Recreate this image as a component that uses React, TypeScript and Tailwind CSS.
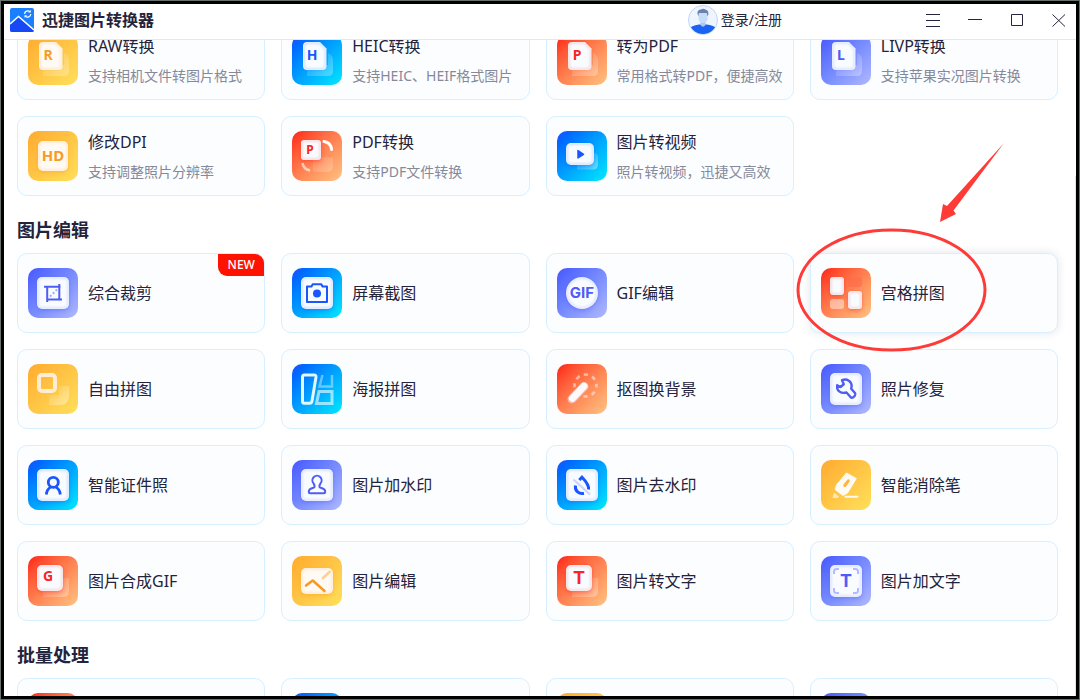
import React, { FC, ReactNode } from 'react';

import clsx from 'clsx';

type Tone = 'orange' | 'blue' | 'red' | 'purple';

type Tool = {
  name?: string;
  description?: string;
  tone: Tone;
  icon?: ReactNode;
  isNew?: boolean;
  marked?: boolean;
};

const TILE_CLASSES: Record<Tone, string> = {
  orange: 'bg-linear-to-br from-[#ffab2e] to-[#ffe05a]',
  blue: 'bg-linear-to-br from-[#1a4cff] to-[#00e8ff]',
  red: 'bg-linear-to-br from-[#ff1212] to-[#ffc382]',
  purple: 'bg-linear-to-br from-[#4855ff] to-[#b0b8ff]'
};

const INK: Record<Tone, string> = {
  orange: '#f79a26',
  blue: '#1a56ff',
  red: '#fb2424',
  purple: '#4f5df5'
};

const GLYPH_FONT = '"Noto Sans", "Open Sans", sans-serif';
const GLYPH_FONT_WIDE = 'Inter, "Liberation Sans", sans-serif';

type PlateProps = {
  x?: number;
  y?: number;
  w?: number;
  h?: number;
  r?: number;
  tone: Tone;
};

const Plate: FC<PlateProps> = ({ x = 9, y = 9, w = 32, h = 32, r = 5, tone }) => (
  <g>
    <rect x={x} y={y + 2} width={w} height={h} rx={r} fill={INK[tone]} opacity="0.35" className="blur-[2px]" />
    <rect x={x} y={y} width={w} height={h} rx={r} fill={tone === 'orange' ? '#fffaf4' : '#f8fcff'} />
    <rect
      x={x + 1}
      y={y + 1}
      width={w - 2}
      height={h - 2}
      rx={r - 1}
      fill="none"
      stroke={INK[tone]}
      strokeWidth="2"
      opacity="0.16"
      className="blur-[1px]"
    />
  </g>
);

const Ghost: FC<{ id: string; d: string; opacity?: number }> = ({ id, d, opacity = 0.4 }) => (
  <g>
    <linearGradient id={id} x1="0.25" y1="0.25" x2="1" y2="1">
      <stop offset="0" stopColor="#fff" stopOpacity="0.1" />
      <stop offset="1" stopColor="#fff" stopOpacity={opacity} />
    </linearGradient>
    <path d={d} fill={`url(#${id})`} />
  </g>
);

const Letter: FC<{ x: number; y: number; size: number; tone: Tone; wide?: boolean; children: string }> = ({
  x,
  y,
  size,
  tone,
  wide,
  children
}) => (
  <text
    x={x}
    y={y}
    fontSize={size}
    fontWeight="700"
    textAnchor="middle"
    fontFamily={wide ? GLYPH_FONT_WIDE : GLYPH_FONT}
    fill={INK[tone]}
  >
    {children}
  </text>
);

const DocIcon: FC<{ letter: string; tone: Tone }> = ({ letter, tone }) => (
  <>
    <Ghost id={`doc-${letter}`} d="M15 30H36V18Q41 20 41 25V36Q41 41 36 41H15Z" opacity={0.3} />
    <path d="M15 7h13l6.5 6.5V31q0 4-4 4H15q-4 0-4-4V11q0-4 4-4z" fill={tone === 'orange' ? '#fffaf4' : '#f8fcff'} />
    <path
      d="M15 8h12.500l6 6V30q0 4-4 4H16q-4 0-4-4V12q0-4 3-4z"
      fill="none"
      stroke={INK[tone]}
      strokeWidth="2"
      opacity="0.16"
      className="blur-[1px]"
    />
    <Letter x={20} y={25} size={14} tone={tone}>
      {letter}
    </Letter>
  </>
);

const CardLetterIcon: FC<{ letter: string; wide?: boolean }> = ({ letter, wide }) => (
  <>
    <Ghost id={`stack-${letter}`} d="M15 32H34V22H41V35Q41 41 35 41H15Z" opacity={0.3} />
    <Plate w={26} h={26} tone="red" />
    <Letter x={wide ? 22 : 20} y={wide ? 28 : 25} size={wide ? 18 : 14} wide={wide} tone="red">
      {letter}
    </Letter>
  </>
);

const HdIcon = (
  <>
    <Plate x={10} y={10} w={30} h={30} tone="orange" />
    <Letter x={25} y={30} size={15} tone="orange">
      HD
    </Letter>
  </>
);

const PdfIcon = (
  <>
    <Ghost id="pdf" d="M21 26H41V35Q41 41 35 41H21Z" opacity={0.25} />
    <Plate w={20} h={20} r={3} tone="red" />
    <Letter x={18} y={23} size={12} tone="red">
      P
    </Letter>
    <path d="M32 10.500c4.500.5 7 3.500 7.600 8" fill="none" stroke="#fff" strokeWidth="3" strokeLinecap="round" />
    <path d="M10.500 32c.5 4 3 6.500 7.500 7.500" fill="none" stroke="#fff" strokeWidth="2.500" opacity="0.6" />
  </>
);

const VideoIcon = (
  <>
    <Ghost id="video" d="M20 30H36V21Q41 22 41 27V33Q41 38.500 36 38.500H20Z" />
    <Plate y={12} w={28} h={22} tone="blue" />
    <path d="M21 19.500v7.500l5.500-3.700z" fill={INK.blue} stroke={INK.blue} strokeWidth="1.500" strokeLinejoin="round" />
  </>
);

const CropIcon = (
  <>
    <Plate tone="purple" />
    <path d="M16 18.700H32.500M31.300 16V32M19.200 18V34M19 31.600H34" fill="none" stroke={INK.purple} strokeWidth="2" />
    <path d="M22 28.500l7-7" stroke={INK.purple} strokeWidth="2" strokeDasharray="2 2" opacity="0.5" />
  </>
);

const CameraIcon = (
  <>
    <Plate tone="blue" />
    <path
      d="M15 18.500h4.500l1.200-2.200h8.600l1.200 2.200H35V34H15z"
      fill="none"
      stroke={INK.blue}
      strokeWidth="2"
      strokeLinejoin="round"
    />
    <circle cx="25" cy="25.500" r="4" fill={INK.blue} />
  </>
);

const GifIcon = (
  <>
    <Plate r={16} tone="purple" />
    <Letter x={25} y={30} size={15} wide tone="purple">
      GIF
    </Letter>
  </>
);

const GridIcon = (
  <>
    <rect x="27" y="9" width="14" height="10" rx="3" fill="#ff6a4a" opacity="0.6" />
    <rect x="9" y="31" width="14" height="10" rx="3" fill="#fff" opacity="0.45" />
    <Plate w={14} h={18} r={3} tone="red" />
    <Plate x={27} y={23} w={14} h={18} r={3} tone="red" />
  </>
);

const FreeIcon = (
  <>
    <Ghost id="free" d="M21 31H31V22H41V31Q41 41 31 41H21Z" opacity={0.45} />
    <rect x="11" y="11" width="16" height="16" rx="3" fill="none" stroke="#ffecd2" strokeWidth="4" />
  </>
);

const PosterIcon = (
  <>
    <path
      d="M12.500 11H22q2.200 0 2 2L20 37q-.4 2.300-2.500 2.300H12.500q-2 0-2-2V13q0-2 2-2z"
      fill="none"
      stroke="#e4f6ff"
      strokeWidth="3"
    />
    <path d="M30.500 11L27.500 22.500H40V11" fill="none" stroke="#fff" strokeWidth="2.500" opacity="0.4" />
    <path d="M27 27.500H40V39.500H24.500z" fill="none" stroke="#fff" strokeWidth="3" opacity="0.6" />
  </>
);

const CutoutIcon = (
  <>
    <circle
      cx="28.500"
      cy="21.500"
      r="11"
      fill="none"
      stroke="#fff"
      strokeWidth="2.600"
      strokeDasharray="4.200 4.440"
      strokeDashoffset="2.100"
      opacity="0.5"
    />
    <path d="M15 35L27 22.500" stroke="#f5b8b0" strokeWidth="9" strokeLinecap="round" />
    <path d="M15.500 34.300L27 22.200" stroke="#fffafa" strokeWidth="7" strokeLinecap="round" />
  </>
);

const RepairIcon = (
  <>
    <Plate tone="purple" />
    <path
      d="M21 16.200C26 14 31 17.500 30.600 22.500L30.200 24.800 34 29Q35 30.500 33.800 31.800L32 33.500Q30.500 34.300 29.500 33L25.500 28.500C20 30 15.500 27 16.200 21.300L19.500 23 22.800 20.300z"
      fill="none"
      stroke={INK.purple}
      strokeWidth="2.400"
      strokeLinejoin="round"
    />
  </>
);

const PortraitIcon = (
  <>
    <Plate tone="blue" />
    <circle cx="25.300" cy="22.300" r="5" fill="none" stroke={INK.blue} strokeWidth="2.800" />
    <path
      d="M18.300 34.500c.4-3.700 1.900-6 4.400-7.400M32.300 34.500c-.4-3.700-1.900-6-4.400-7.400"
      fill="none"
      stroke={INK.blue}
      strokeWidth="2.800"
    />
  </>
);

const StampIcon = (
  <>
    <Plate tone="purple" />
    <path
      d="M22.500 27c.3-1.800-.2-2.700-1-3.700a4.600 4.600 0 1 1 7 0c-.8 1-1.300 1.900-1 3.700.3 1.300 5.700.8 5.700 4.500v.3q0 1.500-1.500 1.500H18.300q-1.500 0-1.500-1.500v-.3c0-3.700 5.400-3.200 5.700-4.500z"
      fill="none"
      stroke={INK.purple}
      strokeWidth="2"
      strokeLinejoin="round"
    />
  </>
);

const DropIcon = (
  <>
    <Plate tone="blue" />
    <path d="M22.300 20L25 17.200c3.500 3.600 7.200 7.600 6.600 12.300" fill="none" stroke={INK.blue} strokeWidth="3" />
    <path d="M18.500 25.500c-1 5 3 8.800 8.500 8" fill="none" stroke={INK.blue} strokeWidth="3" />
    <path d="M16.500 19.500L33 34.500" stroke="#c9d3ff" strokeWidth="2" />
  </>
);

const EraserIcon = (
  <>
    <path
      d="M25.500 13L35.300 18.500 26.500 33 22 35.500 14 29.500 15.500 25z"
      fill="#fffaf2"
      stroke="#fffaf2"
      strokeWidth="1"
      strokeLinejoin="round"
    />
    <path d="M27.300 20.800L23.800 25.500" stroke="#ffb53a" strokeWidth="3" strokeLinecap="round" />
    <path d="M13 32.500l5 4-1.500 1.500h-5z" fill="#fff" opacity="0.6" />
    <path d="M24.500 36.700H36.500" stroke="#fffaf2" strokeWidth="2" strokeLinecap="round" />
  </>
);

const EditIcon = (
  <>
    <Plate y={12} h={26} tone="orange" />
    <path
      d="M14 29.500L20.700 24.500 32.500 35"
      fill="none"
      stroke={INK.orange}
      strokeWidth="2.600"
      strokeLinecap="round"
      strokeLinejoin="round"
    />
    <path d="M31 22L37.500 16" stroke="#ffcf94" strokeWidth="2.600" strokeLinecap="round" />
  </>
);

const AddTextIcon = (
  <>
    <Plate tone="purple" />
    <path
      d="M13 18V15.500q0-2.500 2.500-2.500H18M32 13h2.500q2.500 0 2.500 2.500V18M37 32v2.500q0 2.500-2.500 2.500H32M18 37h-2.500q-2.500 0-2.500-2.500V32"
      fill="none"
      stroke="#b3baff"
      strokeWidth="2"
    />
    <Letter x={25} y={31} size={18} wide tone="purple">
      T
    </Letter>
  </>
);

const CONVERT_TOOLS: Tool[] = [
  {
    name: 'RAW转换',
    description: '支持相机文件转图片格式',
    tone: 'orange',
    icon: <DocIcon letter="R" tone="orange" />
  },
  {
    name: 'HEIC转换',
    description: '支持HEIC、HEIF格式图片',
    tone: 'blue',
    icon: <DocIcon letter="H" tone="blue" />
  },
  {
    name: '转为PDF',
    description: '常用格式转PDF，便捷高效',
    tone: 'red',
    icon: <DocIcon letter="P" tone="red" />
  },
  {
    name: 'LIVP转换',
    description: '支持苹果实况图片转换',
    tone: 'purple',
    icon: <DocIcon letter="L" tone="purple" />
  },
  { name: '修改DPI', description: '支持调整照片分辨率', tone: 'orange', icon: HdIcon },
  { name: 'PDF转换', description: '支持PDF文件转换', tone: 'red', icon: PdfIcon },
  { name: '图片转视频', description: '照片转视频，迅捷又高效', tone: 'blue', icon: VideoIcon }
];

const EDIT_TOOLS: Tool[] = [
  { name: '综合裁剪', tone: 'purple', icon: CropIcon, isNew: true },
  { name: '屏幕截图', tone: 'blue', icon: CameraIcon },
  { name: 'GIF编辑', tone: 'purple', icon: GifIcon },
  { name: '宫格拼图', tone: 'red', icon: GridIcon, marked: true },
  { name: '自由拼图', tone: 'orange', icon: FreeIcon },
  { name: '海报拼图', tone: 'blue', icon: PosterIcon },
  { name: '抠图换背景', tone: 'red', icon: CutoutIcon },
  { name: '照片修复', tone: 'purple', icon: RepairIcon },
  { name: '智能证件照', tone: 'blue', icon: PortraitIcon },
  { name: '图片加水印', tone: 'purple', icon: StampIcon },
  { name: '图片去水印', tone: 'blue', icon: DropIcon },
  { name: '智能消除笔', tone: 'orange', icon: EraserIcon },
  { name: '图片合成GIF', tone: 'red', icon: <CardLetterIcon letter="G" /> },
  { name: '图片编辑', tone: 'orange', icon: EditIcon },
  { name: '图片转文字', tone: 'red', icon: <CardLetterIcon letter="T" wide /> },
  { name: '图片加文字', tone: 'purple', icon: AddTextIcon }
];

const BATCH_TOOLS: Tool[] = [{ tone: 'red' }, { tone: 'blue' }, { tone: 'orange' }, { tone: 'purple' }];

// Hand-drawn style pointer: ellipse around the card plus an arrow coming from the top right
const Marker: FC = () => (
  <svg
    className="absolute -left-4 -top-28 z-10 pointer-events-none"
    width="212"
    height="212"
    viewBox="0 0 212 212"
    fill="none"
  >
    <ellipse cx="96.500" cy="148" rx="93.500" ry="60" stroke="#ff3b38" strokeWidth="3" />
    <path d="M145 80L148 62l4 2L209 1 158.500 68.500l2.500 3.500z" fill="#ff3b38" />
  </svg>
);

const ToolCard: FC<{ tool: Tool }> = ({ tool }) => (
  <button
    type="button"
    className={clsx(
      'relative flex items-center gap-[10px] h-20 px-[10px] text-left rounded-[10px] border border-[#d6f0ff] bg-[#fcfdff]',
      tool.marked && 'shadow-[0_0_10px_rgba(30,40,90,0.12)]'
    )}
  >
    <span className={clsx('shrink-0 size-[50px] rounded-[10px] overflow-hidden', TILE_CLASSES[tool.tone])}>
      <svg width="50" height="50" viewBox="0 0 50 50">
        {tool.icon}
      </svg>
    </span>
    <span className="flex flex-col min-w-0 whitespace-nowrap">
      <span className="text-base leading-8">{tool.name}</span>
      {tool.description && <span className="text-sm leading-7 text-[#85899a]">{tool.description}</span>}
    </span>
    {tool.isNew && (
      <span className="absolute right-0 top-0 w-[46px] h-[22px] text-center text-[12px] leading-[22px] font-medium text-white bg-[#ff1200] rounded-tr-[9px] rounded-bl-[9px]">
        NEW
      </span>
    )}
    {tool.marked && <Marker />}
  </button>
);

const Section: FC<{ title?: string; tools: Tool[] }> = ({ title, tools }) => (
  <section>
    {title && <h2 className="mt-5 mb-[9px] text-lg leading-7 font-bold">{title}</h2>}
    <div className="grid grid-cols-4 gap-4">
      {tools.map((tool, index) => (
        <ToolCard key={index} tool={tool} />
      ))}
    </div>
  </section>
);

const Logo: FC = () => (
  <svg width="24" height="24" viewBox="0 0 24 24" fill="none">
    <rect width="24" height="24" rx="2" fill="#1a80ff" />
    <path d="M0 16.500L8.500 9 24 22v0q0 2-2 2H2q-2 0-2-2z" fill="#1748f5" />
    <path d="M0 16L8.500 8.500 24 22" stroke="#fff" strokeWidth="1.500" />
    <path d="M14.500 6a3.300 3.300 0 0 1 5.500-2.300M20.800 6a3.300 3.300 0 0 1-5.500 2.300" stroke="#fff" strokeWidth="1.200" />
    <path d="M20.800 2v2.600h-2.600zM14.500 9.800V7.200h2.600z" fill="#fff" />
  </svg>
);

const Avatar: FC = () => (
  <svg width="30" height="30" viewBox="0 0 30 30">
    <clipPath id="avatar">
      <circle cx="15" cy="15" r="14" />
    </clipPath>
    <circle cx="15" cy="15" r="14.500" fill="#eef5ff" stroke="#bcd5fa" />
    <g clipPath="url(#avatar)">
      <path d="M1 30V24q2-3.500 10-4.500h8q8 1 10 4.500v6z" fill="#1b62f2" />
      <path d="M12.500 15h5v5q-2.500 3.500-5 0z" fill="#a9c6f5" />
      <path d="M10.500 7h9v6q0 5-4.500 5t-4.500-5z" fill="#c6dcfb" />
      <path d="M9.500 9Q9 4.500 13 4.500q2-1.500 5 .2 3 1 2.300 5l-.8 1.500-.7-3.200h-7l-1 .2-.3 3z" fill="#6c81ad" />
    </g>
  </svg>
);

const WINDOW_BUTTONS = [
  { label: '菜单', path: 'M0 .5H14M0 6.500H14M0 12.500H14' },
  { label: '最小化', path: 'M0 5.500H14' },
  { label: '最大化', path: 'M1.500 .5H12.500V11.500H1.500z' },
  { label: '关闭', path: 'M.5 .5L13 12.500M13 .5L.5 12.500' }
];

const TitleBar: FC = () => (
  <header className="relative z-20 flex items-center shrink-0 h-9 pl-[6px] pr-[10px] pb-[3px] bg-white border-b border-[#e3e6f3]">
    <Logo />
    <h1 className="ml-2 text-base leading-6 font-bold">迅捷图片转换器</h1>
    <button type="button" className="flex items-center gap-[3px] ml-auto mr-36 text-sm leading-5">
      <Avatar />
      登录/注册
    </button>
    <div className="flex items-center gap-7">
      {WINDOW_BUTTONS.map(({ label, path }) => (
        <button key={label} type="button" aria-label={label}>
          <svg width="14" height="13" viewBox="0 0 14 13" fill="none" stroke="#25253d">
            <path d={path} />
          </svg>
        </button>
      ))}
    </div>
  </header>
);

const App: FC = () => (
  <div className="h-screen p-px bg-[#66706f]">
    <div className='relative flex flex-col h-full overflow-hidden border-[3px] border-black bg-white text-[#23233c] font-["Noto_Sans","Noto_Sans_CJK_SC",sans-serif]'>
      <TitleBar />
      <main className="flex-1 min-h-0 overflow-hidden">
        <div className="-mt-5 pl-[13px] pr-[18px]">
          <Section tools={CONVERT_TOOLS} />
          <Section title="图片编辑" tools={EDIT_TOOLS} />
          <Section title="批量处理" tools={BATCH_TOOLS} />
        </div>
      </main>
      <div className="absolute right-0 top-43 bottom-0 w-px bg-[#e1e3ea]" />
    </div>
  </div>
);

export default App;
